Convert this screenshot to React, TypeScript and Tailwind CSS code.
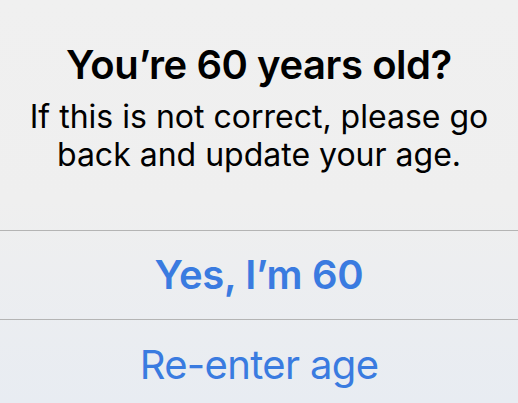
export default function App() {
  return (
    <div
      className="flex h-[403px] w-[518px] flex-col overflow-hidden bg-gradient-to-b from-[#f0f0f0] via-[#efefef] to-[#e8ecf2] text-center"
      style={{ fontFamily: "Inter, 'Noto Sans', sans-serif" }}
    >
      <div className="flex h-[230px] shrink-0 flex-col items-center pt-[41px]">
        <h2 className="text-[40px] font-semibold leading-[48px] tracking-[-0.45px] text-black">
          You’re 60 years old?
        </h2>
        <p className="mt-[9px] px-4 text-[32px] leading-[38px] text-black">
          If this is not correct, please go
          <br />
          back and update your age.
        </p>
      </div>
      <div className="h-px shrink-0 bg-[#b4b4b4]" />
      <button
        type="button"
        className="h-[88px] shrink-0 text-[40px] font-semibold leading-[88px] tracking-[-0.3px] text-[#3a7be0]"
      >
        Yes, I’m 60
      </button>
      <div className="h-px shrink-0 bg-[#b4b4b4]" />
      <button
        type="button"
        className="h-[88px] shrink-0 text-[40px] leading-[90px] tracking-[-0.65px] text-[#3a7be0]"
      >
        Re-enter age
      </button>
    </div>
  );
}
